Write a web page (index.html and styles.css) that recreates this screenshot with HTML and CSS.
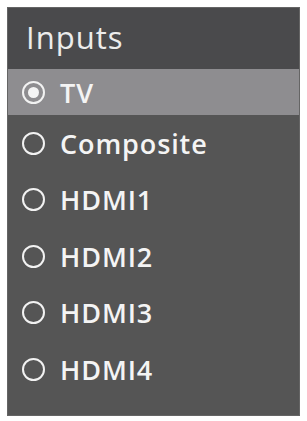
FILE: index.html
```html
<!DOCTYPE html>
<html>
<head>
<meta charset="utf-8">
<link rel="stylesheet" href="styles.css">
</head>
<body>
<div class="panel">
  <div class="header">Inputs</div>
  <ul class="list">
    <li class="item selected"><span class="radio"></span><span class="label">TV</span></li>
    <li class="item"><span class="radio"></span><span class="label">Composite</span></li>
    <li class="item"><span class="radio"></span><span class="label">HDMI1</span></li>
    <li class="item"><span class="radio"></span><span class="label">HDMI2</span></li>
    <li class="item"><span class="radio"></span><span class="label">HDMI3</span></li>
    <li class="item"><span class="radio"></span><span class="label">HDMI4</span></li>
  </ul>
</div>
</body>
</html>
```
FILE: styles.css
```css
html, body {
  margin: 0;
  padding: 0;
  background: #ffffff;
}
body {
  padding: 7px 0 0 7px;
  font-family: "Open Sans", "Liberation Sans", sans-serif;
}
.panel {
  width: 293px;
  height: 409px;
  box-sizing: border-box;
  background: #555555;
  border: 1px solid #656565;
  display: flex;
  flex-direction: column;
}
.header {
  height: 61px;
  background: #4a4a4c;
  color: #ececec;
  font-size: 31px;
  font-weight: 400;
  letter-spacing: 1px;
  line-height: 1;
  padding-left: 18px;
  padding-top: 14px;
  box-sizing: border-box;
}
.list {
  list-style: none;
  margin: 0;
  padding: 0;
}
.item {
  height: 56.5px;
  display: flex;
  align-items: center;
  padding-left: 14px;
  color: #f4f4f4;
}
.item.selected {
  height: 46px;
  background: #8e8d90;
}
.radio {
  width: 23px;
  height: 23px;
  box-sizing: border-box;
  border: 2px solid #f2f2f2;
  border-radius: 50%;
  display: flex;
  align-items: center;
  justify-content: center;
  flex: none;
}
.selected .radio::after {
  content: "";
  width: 11px;
  height: 11px;
  border-radius: 50%;
  background: #f4f4f4;
}
.label {
  margin-left: 15px;
  font-size: 27px;
  font-weight: 600;
  letter-spacing: 0.9px;
  line-height: 1;
}
```
